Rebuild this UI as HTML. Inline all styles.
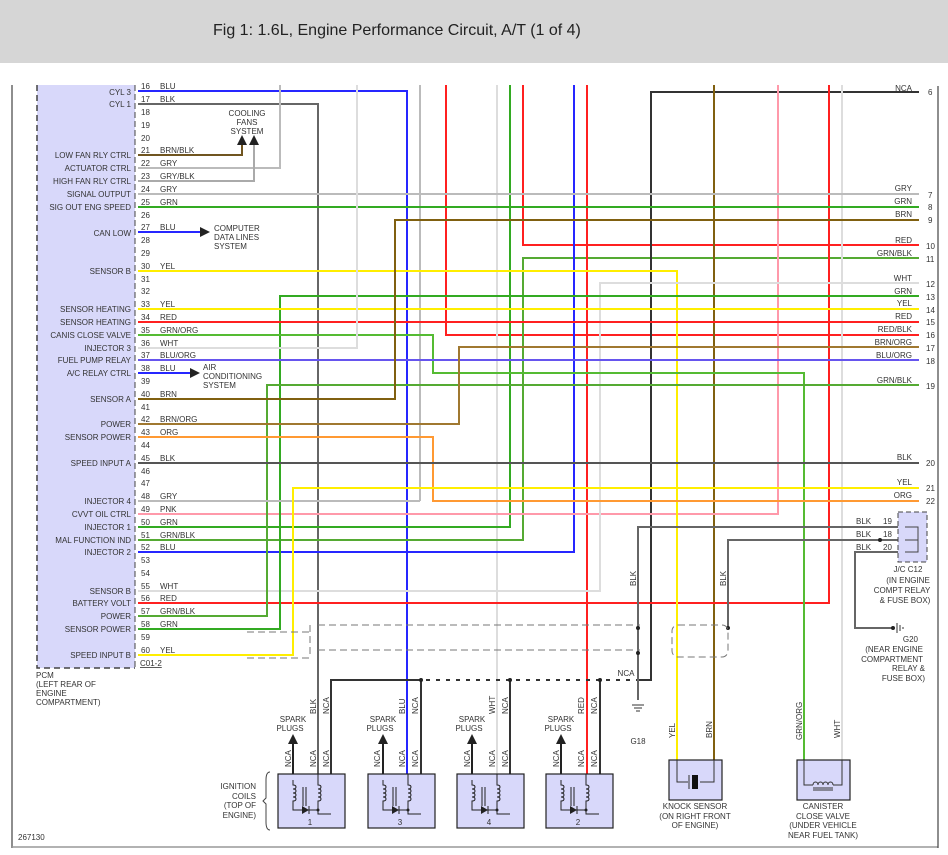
<!DOCTYPE html>
<html><head><meta charset="utf-8"><style>
html,body{margin:0;padding:0;background:#fff}
body{width:948px;height:855px;overflow:hidden;position:relative}
#hdr{position:absolute;left:0;top:0;width:948px;height:63px;background:#d6d6d6}
#hdr div{position:absolute;left:213px;top:22px;font:16px "Liberation Sans",sans-serif;color:#222}
svg{position:absolute;left:0;top:0}
text{font-family:"Liberation Sans",sans-serif;font-size:8px;fill:#333}
.r{text-anchor:end}
.m{text-anchor:middle}
</style></head><body>
<div id="hdr"><div>Fig 1: 1.6L, Engine Performance Circuit, A/T (1 of 4)</div></div>
<svg width="948" height="855" viewBox="0 0 948 855">
<!-- frame -->
<line x1="12" y1="85" x2="12" y2="848" stroke="#444" stroke-width="1.2"/>
<line x1="12" y1="847" x2="938" y2="847" stroke="#999" stroke-width="1.5"/>
<line x1="938" y1="86" x2="938" y2="848" stroke="#444" stroke-width="1.2"/>
<!-- PCM box -->
<rect x="37" y="85" width="98" height="583" fill="#d8d8fa" stroke="none"/>
<path d="M37 85V668H135" fill="none" stroke="#444" stroke-width="1.5" stroke-dasharray="6,4"/>
<line x1="135" y1="85" x2="135" y2="668" stroke="#444" stroke-width="1" stroke-dasharray="6,3"/>
<g fill="none" stroke-width="2">
<!-- top verticals -->
<polyline points="138,91 407,91 407,774" stroke="#2626ff"/>
<polyline points="138,104 318,104 318,820" stroke="#666"/>
<line x1="420" y1="85" x2="420" y2="501" stroke="#bbb"/>
<polyline points="446,85 446,335 919,335" stroke="#ff2020"/>
<line x1="497" y1="85" x2="497" y2="820" stroke="#ddd"/>
<polyline points="510,85 510,527 138,527" stroke="#33aa22"/>
<polyline points="523,85 523,245 919,245" stroke="#ff2020"/>
<polyline points="919,258 523,258 523,540 138,540" stroke="#55aa33"/>
<polyline points="574,85 574,552 138,552" stroke="#2626ff"/>
<line x1="587" y1="85" x2="587" y2="820" stroke="#ff2020"/>
<polyline points="919,92 651,92 651,680 331,680 331,820" stroke="#333"/>
<line x1="714" y1="85" x2="714" y2="775" stroke="#806010"/>
<polyline points="778,85 778,514 138,514" stroke="#ff99aa"/>
<polyline points="829,85 829,603 138,603" stroke="#ff2020"/>
<line x1="842" y1="85" x2="842" y2="775" stroke="#ddd"/>
<!-- cooling fans -->
<polyline points="138,155 242,155 242,145" stroke="#705520"/>
<polyline points="138,168 280,168 280,85" stroke="#bbb"/>
<polyline points="138,181 254,181 254,145" stroke="#aaa"/>
<line x1="138" y1="194" x2="919" y2="194" stroke="#bbb"/>
<line x1="138" y1="207" x2="919" y2="207" stroke="#33aa22"/>
<line x1="138" y1="232" x2="200" y2="232" stroke="#2626ff"/>
<polyline points="138,271 677,271 677,775" stroke="#ffee00"/>
<polyline points="919,283 600,283 600,591 138,591" stroke="#ddd"/>
<polyline points="919,296 280,296 280,629 138,629" stroke="#33aa22"/>
<line x1="138" y1="309" x2="919" y2="309" stroke="#ffee00"/>
<line x1="138" y1="322" x2="919" y2="322" stroke="#ff2020"/>
<polyline points="138,335 433,335 433,373 804,373 804,775" stroke="#55bb33"/>
<polyline points="138,348 357,348 357,85" stroke="#ddd"/>
<line x1="138" y1="360" x2="919" y2="360" stroke="#6655ee"/>
<line x1="138" y1="373" x2="190" y2="373" stroke="#2626ff"/>
<polyline points="919,385 267,385 267,616 138,616" stroke="#55aa33"/>
<polyline points="138,399 395,399 395,220 919,220" stroke="#806010"/>
<polyline points="138,424 459,424 459,347 919,347" stroke="#a07830"/>
<polyline points="138,437 433,437 433,501 919,501" stroke="#ff9933"/>
<line x1="138" y1="463" x2="919" y2="463" stroke="#555"/>
<polyline points="138,501 420,501" stroke="#bbb"/>
<polyline points="138,655 293,655 293,488 919,488" stroke="#ffee00"/>
<!-- J/C -->
<polyline points="898,527 638,527 638,700" stroke="#666"/>
<polyline points="898,540 728,540 728,628" stroke="#666"/>
<polyline points="898,552 855,552 855,628 893,628" stroke="#666"/>
<line x1="331" y1="680" x2="331" y2="680" stroke="#333"/>
<line x1="421" y1="680" x2="421" y2="820" stroke="#333"/>
<line x1="510" y1="680" x2="510" y2="820" stroke="#333"/>
<line x1="600" y1="680" x2="600" y2="820" stroke="#333"/>
</g>
<line x1="420" y1="680" x2="638" y2="680" stroke="#fff" stroke-width="2.5" stroke-dasharray="6,4"/>
<g fill="#222"><circle cx="421" cy="680" r="2"/><circle cx="510" cy="680" r="2"/><circle cx="600" cy="680" r="2"/><circle cx="638" cy="628" r="2"/><circle cx="638" cy="653" r="2"/><circle cx="728" cy="628" r="2"/><circle cx="880" cy="540" r="2"/><circle cx="893" cy="628" r="2"/>
<polygon points="237,145 247,145 242,135"/><polygon points="249,145 259,145 254,135"/>
<polygon points="200,227 200,237 210,232"/><polygon points="190,368 190,378 200,373"/></g>
<!-- shields -->
<g fill="none" stroke="#777" stroke-width="1" stroke-dasharray="7,4">
<line x1="247" y1="632" x2="310" y2="632"/><line x1="318" y1="625" x2="640" y2="625"/>
<line x1="318" y1="650" x2="640" y2="650"/><line x1="247" y1="658" x2="310" y2="658"/>
<line x1="310" y1="625" x2="310" y2="658"/>
<rect x="672" y="625" width="56" height="32" rx="6"/>
</g>
<!-- J/C box -->
<rect x="898" y="512" width="29" height="50" fill="#d8d8fa" stroke="#444" stroke-dasharray="5,3"/>
<polyline points="905,527 918,527 918,552 905,552" fill="none" stroke="#444"/>
<line x1="905" y1="540" x2="918" y2="540" stroke="#444"/>
<!-- G20 ground -->
<g stroke="#333"><line x1="897" y1="623" x2="897" y2="633"/><line x1="900" y1="625" x2="900" y2="631"/><line x1="903" y1="627" x2="903" y2="629"/></g>
<!-- G18 -->
<g stroke="#333"><line x1="632" y1="705" x2="644" y2="705"/><line x1="634" y1="708" x2="642" y2="708"/><line x1="636" y1="711" x2="640" y2="711"/></g>
<!-- PCM labels -->
<g class="r">
<text x="131" y="95" class="r">CYL 3</text><text x="131" y="107" class="r">CYL 1</text>
<text x="131" y="158" class="r">LOW FAN RLY CTRL</text><text x="131" y="171" class="r">ACTUATOR CTRL</text>
<text x="131" y="184" class="r">HIGH FAN RLY CTRL</text><text x="131" y="197" class="r">SIGNAL OUTPUT</text>
<text x="131" y="210" class="r">SIG OUT ENG SPEED</text><text x="131" y="236" class="r">CAN LOW</text>
<text x="131" y="274" class="r">SENSOR B</text><text x="131" y="312" class="r">SENSOR HEATING</text>
<text x="131" y="325" class="r">SENSOR HEATING</text><text x="131" y="338" class="r">CANIS CLOSE VALVE</text>
<text x="131" y="351" class="r">INJECTOR 3</text><text x="131" y="363" class="r">FUEL PUMP RELAY</text>
<text x="131" y="376" class="r">A/C RELAY CTRL</text><text x="131" y="402" class="r">SENSOR A</text>
<text x="131" y="427" class="r">POWER</text><text x="131" y="440" class="r">SENSOR POWER</text>
<text x="131" y="466" class="r">SPEED INPUT A</text><text x="131" y="504" class="r">INJECTOR 4</text>
<text x="131" y="517" class="r">CVVT OIL CTRL</text><text x="131" y="530" class="r">INJECTOR 1</text>
<text x="131" y="543" class="r">MAL FUNCTION IND</text><text x="131" y="555" class="r">INJECTOR 2</text>
<text x="131" y="594" class="r">SENSOR B</text><text x="131" y="606" class="r">BATTERY VOLT</text>
<text x="131" y="619" class="r">POWER</text><text x="131" y="632" class="r">SENSOR POWER</text>
<text x="131" y="658" class="r">SPEED INPUT B</text>
</g>
<!-- pin numbers -->
<g>
<text x="141" y="89">16</text><text x="141" y="102">17</text><text x="141" y="115">18</text><text x="141" y="128">19</text><text x="141" y="141">20</text><text x="141" y="153">21</text><text x="141" y="166">22</text><text x="141" y="179">23</text><text x="141" y="192">24</text><text x="141" y="205">25</text><text x="141" y="218">26</text><text x="141" y="230">27</text><text x="141" y="243">28</text><text x="141" y="256">29</text><text x="141" y="269">30</text><text x="141" y="282">31</text><text x="141" y="294">32</text><text x="141" y="307">33</text><text x="141" y="320">34</text><text x="141" y="333">35</text><text x="141" y="346">36</text><text x="141" y="358">37</text><text x="141" y="371">38</text><text x="141" y="384">39</text><text x="141" y="397">40</text><text x="141" y="410">41</text><text x="141" y="422">42</text><text x="141" y="435">43</text><text x="141" y="448">44</text><text x="141" y="461">45</text><text x="141" y="474">46</text><text x="141" y="486">47</text><text x="141" y="499">48</text><text x="141" y="512">49</text><text x="141" y="525">50</text><text x="141" y="538">51</text><text x="141" y="550">52</text><text x="141" y="563">53</text><text x="141" y="576">54</text><text x="141" y="589">55</text><text x="141" y="601">56</text><text x="141" y="614">57</text><text x="141" y="627">58</text><text x="141" y="640">59</text><text x="141" y="653">60</text>
</g>
<!-- wire colour labels -->
<g>
<text x="160" y="89">BLU</text><text x="160" y="102">BLK</text><text x="160" y="153">BRN/BLK</text><text x="160" y="166">GRY</text><text x="160" y="179">GRY/BLK</text><text x="160" y="192">GRY</text><text x="160" y="205">GRN</text><text x="160" y="230">BLU</text><text x="160" y="269">YEL</text><text x="160" y="307">YEL</text><text x="160" y="320">RED</text><text x="160" y="333">GRN/ORG</text><text x="160" y="346">WHT</text><text x="160" y="358">BLU/ORG</text><text x="160" y="371">BLU</text><text x="160" y="397">BRN</text><text x="160" y="422">BRN/ORG</text><text x="160" y="435">ORG</text><text x="160" y="461">BLK</text><text x="160" y="499">GRY</text><text x="160" y="512">PNK</text><text x="160" y="525">GRN</text><text x="160" y="538">GRN/BLK</text><text x="160" y="550">BLU</text><text x="160" y="589">WHT</text><text x="160" y="601">RED</text><text x="160" y="614">GRN/BLK</text><text x="160" y="627">GRN</text><text x="160" y="653">YEL</text>
</g>
<text x="140" y="666" style="text-decoration:underline">C01-2</text>
<text x="36" y="678">PCM</text><text x="36" y="687">(LEFT REAR OF</text><text x="36" y="696">ENGINE</text><text x="36" y="705">COMPARTMENT)</text>
<text x="247" y="116" class="m">COOLING</text><text x="247" y="125" class="m">FANS</text><text x="247" y="134" class="m">SYSTEM</text>
<text x="214" y="231">COMPUTER</text><text x="214" y="240">DATA LINES</text><text x="214" y="249">SYSTEM</text>
<text x="203" y="370">AIR</text><text x="203" y="379">CONDITIONING</text><text x="203" y="388">SYSTEM</text>
<!-- right side labels -->
<g class="r">
<text x="912" y="91" class="r">NCA</text><text x="912" y="191" class="r">GRY</text><text x="912" y="204" class="r">GRN</text><text x="912" y="217" class="r">BRN</text><text x="912" y="243" class="r">RED</text><text x="912" y="256" class="r">GRN/BLK</text><text x="912" y="281" class="r">WHT</text><text x="912" y="294" class="r">GRN</text><text x="912" y="306" class="r">YEL</text><text x="912" y="319" class="r">RED</text><text x="912" y="332" class="r">RED/BLK</text><text x="912" y="345" class="r">BRN/ORG</text><text x="912" y="358" class="r">BLU/ORG</text><text x="912" y="383" class="r">GRN/BLK</text><text x="912" y="460" class="r">BLK</text><text x="912" y="485" class="r">YEL</text><text x="912" y="498" class="r">ORG</text>
</g>
<g>
<text x="928" y="95">6</text><text x="928" y="198">7</text><text x="928" y="210">8</text><text x="928" y="223">9</text><text x="926" y="249">10</text><text x="926" y="262">11</text><text x="926" y="287">12</text><text x="926" y="300">13</text><text x="926" y="313">14</text><text x="926" y="325">15</text><text x="926" y="338">16</text><text x="926" y="351">17</text><text x="926" y="364">18</text><text x="926" y="389">19</text><text x="926" y="466">20</text><text x="926" y="491">21</text><text x="926" y="504">22</text>
</g>
<text x="856" y="524">BLK</text><text x="856" y="537">BLK</text><text x="856" y="550">BLK</text>
<text x="883" y="524">19</text><text x="883" y="537">18</text><text x="883" y="550">20</text>
<text x="908" y="572" class="m">J/C C12</text><text x="908" y="583" class="m">(IN ENGINE</text><text x="902" y="593" class="m">COMPT RELAY</text><text x="905" y="603" class="m">&amp; FUSE BOX)</text>
<text x="918" y="642" class="r">G20</text><text x="923" y="652" class="r">(NEAR ENGINE</text><text x="923" y="662" class="r">COMPARTMENT</text><text x="925" y="671" class="r">RELAY &amp;</text><text x="925" y="681" class="r">FUSE BOX)</text>
<text x="626" y="676" class="m">NCA</text><text x="638" y="744" class="m">G18</text>
<g transform="rotate(-90)"><text x="-586" y="636">BLK</text><text x="-586" y="726">BLK</text>
<text x="-738" y="675">YEL</text><text x="-738" y="712">BRN</text><text x="-740" y="802">GRN/ORG</text><text x="-738" y="840">WHT</text>
<text x="-714" y="316">BLK</text><text x="-714" y="329">NCA</text><text x="-714" y="405">BLU</text><text x="-714" y="418">NCA</text><text x="-714" y="495">WHT</text><text x="-714" y="508">NCA</text><text x="-714" y="584">RED</text><text x="-714" y="597">NCA</text>
<text x="-767" y="291">NCA</text><text x="-767" y="316">NCA</text><text x="-767" y="329">NCA</text>
<text x="-767" y="380">NCA</text><text x="-767" y="405">NCA</text><text x="-767" y="418">NCA</text>
<text x="-767" y="470">NCA</text><text x="-767" y="495">NCA</text><text x="-767" y="508">NCA</text>
<text x="-767" y="559">NCA</text><text x="-767" y="584">NCA</text><text x="-767" y="597">NCA</text></g>
<!-- coils -->
<defs><g id="coil">
<rect x="0" y="774" width="67" height="54" fill="#d8d8fa" stroke="#222" stroke-width="1.2"/>
<line x1="15" y1="774" x2="15" y2="742" stroke="#222" stroke-width="2"/>
<polygon points="10,744 20,744 15,734" fill="#222"/>
<path d="M15 780v5c4 0 4 4 0 4c4 0 4 4 0 4c4 0 4 4 0 4c4 0 4 4 0 4v9h25" fill="none" stroke="#222"/>
<path d="M40 774v11c4 0 4 4 0 4c4 0 4 4 0 4c4 0 4 4 0 4c4 0 4 4 0 4v13h13" fill="none" stroke="#222"/>
<line x1="25" y1="787" x2="25" y2="806" stroke="#222"/><line x1="28" y1="787" x2="28" y2="806" stroke="#222"/>
<polygon points="24,806 24,814 31,810" fill="#222"/><line x1="31" y1="806" x2="31" y2="814" stroke="#222"/>
<circle cx="40" cy="810" r="1.5" fill="#222"/>
<text x="15" y="722" class="m">SPARK</text><text x="12" y="731" class="m">PLUGS</text>
</g></defs>
<use href="#coil" x="278"/><use href="#coil" x="368"/><use href="#coil" x="457"/><use href="#coil" x="546"/>
<text x="310" y="825" class="m">1</text><text x="400" y="825" class="m">3</text><text x="489" y="825" class="m">4</text><text x="578" y="825" class="m">2</text>
<text x="256" y="789" class="r">IGNITION</text><text x="256" y="799" class="r">COILS</text><text x="256" y="808" class="r">(TOP OF</text><text x="256" y="818" class="r">ENGINE)</text>
<path d="M270 772q-4 0-4 8v18l-3 3l3 3v18q0 8 4 8" fill="none" stroke="#444"/>
<!-- knock sensor -->
<rect x="669" y="760" width="53" height="40" fill="#d8d8fa" stroke="#222" stroke-width="1.2"/>
<polyline points="677,760 677,782 688,782" fill="none" stroke="#333"/><polyline points="714,760 714,782 700,782" fill="none" stroke="#333"/>
<rect x="692" y="775" width="6" height="14" fill="#111"/><line x1="689" y1="775" x2="689" y2="789" stroke="#333"/>
<text x="695" y="809" class="m">KNOCK SENSOR</text><text x="695" y="819" class="m">(ON RIGHT FRONT</text><text x="695" y="828" class="m">OF ENGINE)</text>
<!-- canister -->
<rect x="797" y="760" width="53" height="40" fill="#d8d8fa" stroke="#222" stroke-width="1.2"/>
<polyline points="804,760 804,785 813,785" fill="none" stroke="#333"/><polyline points="842,760 842,785 833,785" fill="none" stroke="#333"/>
<path d="M813 785c0-4 5-4 5 0c0-4 5-4 5 0c0-4 5-4 5 0c0-4 5-4 5 0" fill="none" stroke="#333"/>
<line x1="813" y1="788" x2="833" y2="788" stroke="#333"/><line x1="813" y1="790" x2="833" y2="790" stroke="#333"/>
<text x="823" y="809" class="m">CANISTER</text><text x="823" y="819" class="m">CLOSE VALVE</text><text x="823" y="828" class="m">(UNDER VEHICLE</text><text x="823" y="838" class="m">NEAR FUEL TANK)</text>
<text x="18" y="840">267130</text>
</svg>
</body></html>
